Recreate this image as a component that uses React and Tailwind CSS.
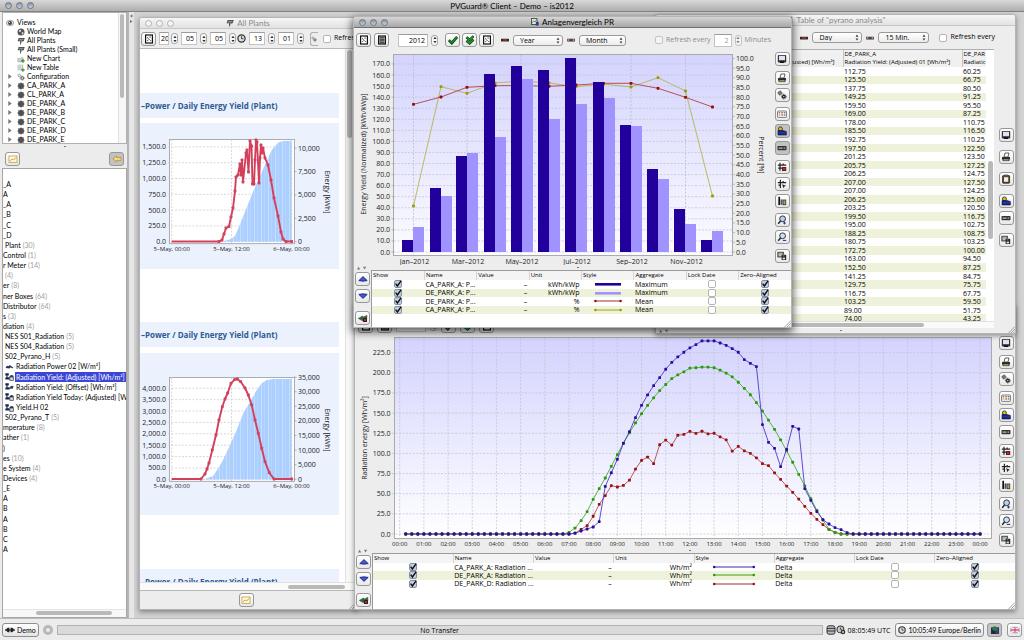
import React from "react";

/* ---------- data ---------- */
const YIELD_A = [112.75, 125.5, 137.75, 149.25, 159.5, 169, 178, 185.5, 192.75, 197.5, 201.25, 205.75, 206.25, 207, 207, 206.25, 203.25, 199.5, 195, 188.25, 180.75, 172.75, 163, 152.5, 141.25, 129.75, 116.75, 103.25, 89, 74];
const YIELD_D = [60.25, 66.75, 80.5, 91.25, 95.5, 87.25, 110.75, 116.5, 110.25, 122.5, 123.5, 127.25, 124.75, 127.5, 124.25, 125, 120.5, 116.75, 102.75, 108.75, 103.25, 100, 94.5, 87.25, 84.75, 75.75, 67.75, 59.5, 51.75, 43.25];
const zeros = (n) => Array(n).fill(0);
const GREEN = [...zeros(28), 2, 7.4, 16.5, 27.7, 43, 56.3, 69.5, 84, 98.5, ...YIELD_A, 59.6, 43.9, 29.4, 17.4, 5.8, 2, ...zeros(24)];
const RED = [...zeros(29), 1, 5.8, 10.3, 22, 36.8, 47.6, 60, 58.3, ...YIELD_D, 34.3, 25.6, 18.2, 11.6, 5.8, 2, ...zeros(24)];
const BLUE = [...zeros(29), 1, 3.7, 6.2, 8.7, 15.3, 59, 76, 92.7, 112.5, 127, 144.4, 159.7, 172.5, 184, 194, 204.4, 213, 219.7, 225.5, 231, 235, 239.5, 239.5, 239.5, 237, 234, 230, 225.5, 216.4, 211.8, 207.7, 135.7, 113.8, 106.3, 83.6, 105, 133.6, 130.3, 56.3, 41.8, 27.7, 17.8, 12.4, 7.9, 5.4, 1.7, ...zeros(22)];

const BARS = [
  [402, 240, 227], [430, 188, 196], [456, 156, 153], [484, 74, 137], [511, 66, 79], [538, 70, 119],
  [565, 58, 104], [593, 82, 98], [620, 125, 126], [647, 169, 179], [674, 209, 224], [701, 240, 231],
];
const MX = [413.5, 441, 467, 495, 521, 549, 576, 603.5, 631, 658, 685.5, 712.5];
const MEAN_RED = [104.3, 97, 87.3, 85.7, 85.5, 86.3, 85, 83.3, 83.3, 88.3, 97.3, 107];
const MEAN_OLIVE = [206, 86.7, 93.3, 83, 81, 83, 86.7, 84, 87, 77.7, 91, 196];

/* ---------- icons ---------- */
const Svg = ({ children, c = "w-[10px] h-[10px]" }) => (
  <svg viewBox="0 0 10 10" className={"shrink-0 " + c} aria-hidden="true">{children}</svg>
);
const ICONS = {
  save: <><rect x="0.8" y="1" width="8.4" height="7.6" rx="0.8" fill="#333" /><rect x="2" y="1.8" width="6" height="4.4" fill="#dfe3f4" /><rect x="3" y="7.4" width="4" height="1.6" fill="#111" /></>,
  print: <><path d="M3 5 L4 1 L8 1 L7 5Z" fill="#fff" stroke="#222" strokeWidth="0.7" /><path d="M1 5h8v2.5H1z" fill="#333" /><rect x="2" y="7" width="6" height="1.8" fill="#cfc88c" stroke="#111" strokeWidth="0.6" /></>,
  tools: <><circle cx="3" cy="3" r="2.1" fill="none" stroke="#666" strokeWidth="0.9" strokeDasharray="0.9 0.6" /><circle cx="3" cy="3" r="1.2" fill="#fff" stroke="#333" strokeWidth="1.1" /><circle cx="6.8" cy="6.6" r="2.3" fill="none" stroke="#333" strokeWidth="1" strokeDasharray="0.9 0.6" /><circle cx="6.8" cy="6.6" r="1.3" fill="#fff" stroke="#222" strokeWidth="1.3" /></>,
  legend: <><rect x="0.5" y="2" width="9" height="6.4" rx="0.6" fill="#f4f4f4" stroke="#666" strokeWidth="0.8" /><rect x="1.6" y="3.2" width="1.6" height="1.2" fill="#d33" /><rect x="1.6" y="5.4" width="1.6" height="1.2" fill="#e90" /><path d="M4.3 3.8h1.6M6.8 3.8h1.6M4.3 6h1.6M6.8 6h1.6" stroke="#444" strokeWidth="1" /></>,
  weather: <><circle cx="3.4" cy="2.9" r="2" fill="#e5c100" stroke="#222" strokeWidth="0.8" /><path d="M1 4.5h5l3.4 1v3.5H1z" fill="#18267c" stroke="#0d1550" strokeWidth="0.6" /><path d="M1.4 6.8h7.6" stroke="#4458c0" strokeWidth="0.5" /></>,
  bar: <><rect x="0.5" y="3" width="9" height="4.2" rx="0.8" fill="#333" /><path d="M1.6 5.1h4" stroke="#ddd" strokeWidth="1" /><rect x="6.6" y="4.4" width="1.6" height="1.4" fill="#b99" /></>,
  gridx: <><path d="M3 0.8v8M0.8 3.2h8.4M6.2 1.4v2.4M1.2 6.2h4" stroke="#222" strokeWidth="1.2" /><rect x="5" y="5" width="4.2" height="4" fill="#222" /><path d="M5.7 5.6l2.8 2.8M8.5 5.6L5.7 8.4" stroke="#d22" strokeWidth="1.1" /></>,
  gridc: <><path d="M3.4 0.8v8.2M0.8 3.6h8.4M1.4 6.2h2M6.2 2v1.6" stroke="#222" strokeWidth="1.2" /><path d="M5 5.2l4 1.6-1.6.6-.8 1.8z" fill="#223" /></>,
  axis: <><path d="M2.2 0.8v8.2" stroke="#111" strokeWidth="1.7" /><rect x="3.6" y="3.4" width="1.8" height="5.4" fill="#555" /><rect x="6" y="4" width="2.8" height="4.8" fill="#b89a5c" stroke="#222" strokeWidth="0.7" /></>,
  zin: <><circle cx="5.6" cy="3.8" r="2.9" fill="#bcd0f2" stroke="#222" strokeWidth="0.9" /><path d="M3.6 6L1.2 8.8" stroke="#222" strokeWidth="1.4" /><path d="M6 8h3M7.5 6.6v2.8" stroke="#1c2f8f" strokeWidth="0.9" /></>,
  zout: <><circle cx="5.6" cy="3.8" r="2.9" fill="#cfe0fa" stroke="#222" strokeWidth="0.9" /><path d="M3.6 6L1.2 8.8" stroke="#222" strokeWidth="1.4" /><path d="M5.8 8.4h3.4" stroke="#1c2f8f" strokeWidth="1" /></>,
  exp: <><rect x="0.8" y="1.2" width="5.6" height="4.8" fill="#999" stroke="#333" strokeWidth="0.8" /><path d="M2 3h3M2 4.4h3" stroke="#eee" strokeWidth="0.6" /><rect x="4.6" y="3.8" width="4.6" height="5.2" fill="#2a2a2a" /><rect x="5.6" y="6.6" width="2.4" height="1.8" fill="#cde5cd" /><path d="M6.8 3v2.6" stroke="#3a3" strokeWidth="1" /></>,
  clip: <><rect x="1.6" y="1.6" width="7" height="7.6" rx="0.7" fill="#5f4a26" stroke="#111" strokeWidth="0.7" /><rect x="3" y="3.2" width="4.2" height="4.6" fill="#eee" /><rect x="3.4" y="0.6" width="3.4" height="1.9" fill="#555" /></>,
  sheet: <><rect x="1.6" y="1" width="6.8" height="8" fill="#fff" stroke="#111" strokeWidth="1.2" /><path d="M3 3.4l1.6 1.2M5.4 3h1.4M3.2 6.8l1.4-1M5.4 5.4l1.4 1.4" stroke="#333" strokeWidth="0.9" fill="none" /></>,
  table: <><rect x="1.6" y="1" width="6.8" height="8" fill="#bbb" stroke="#111" strokeWidth="1.2" /><path d="M2.8 2.8h4.4M2.8 4.3h4.4M2.8 5.8h4.4M2.8 7.3h4.4" stroke="#222" strokeWidth="0.9" /></>,
  check: <><path d="M0.8 5.2L3.8 8 9.2 1.8" fill="none" stroke="#0c3c10" strokeWidth="2.8" /><path d="M1.2 5.4L3.8 7.7 8.9 2" fill="none" stroke="#1f9a2c" strokeWidth="1.2" /></>,
  check2: <><path d="M1.4 2.2L4.6 4.8 8.6 1.2" fill="none" stroke="#0c3c10" strokeWidth="2.4" /><path d="M1.4 5.8L4.6 8.4 8.6 4.6" fill="none" stroke="#0c3c10" strokeWidth="2.4" /><path d="M1.7 2.4L4.6 4.7 8.3 1.5M1.7 6L4.6 8.2 8.3 4.9" fill="none" stroke="#1fa52c" strokeWidth="1.1" /></>,
  up: <path d="M0.8 6.6L5 2.6 9.2 6.6Q5 7.8 0.8 6.6Z" fill="#4258d8" stroke="#111c66" strokeWidth="0.8" />,
  down: <path d="M0.8 3.4L5 7.4 9.2 3.4Q5 2.2 0.8 3.4Z" fill="#4258d8" stroke="#111c66" strokeWidth="0.8" />,
  del: <><path d="M0.4 5.4L4.6 3V4.4L8.8 2.4v3.2L4.6 6.4v1.4z" fill="#2d6b3a" stroke="#132" strokeWidth="0.5" /><rect x="5" y="5" width="4" height="4" fill="#222" /><path d="M5.8 5.8l2.4 2.4M8.2 5.8L5.8 8.2" stroke="#d22" strokeWidth="0.9" /></>,
  chip: <><rect x="0" y="3.4" width="10" height="3.4" rx="0.5" fill="#2b2b2b" /><rect x="2.4" y="4" width="5.2" height="1.8" fill="#b03028" /></>,
  chip2: <><rect x="0" y="3.4" width="10" height="3.4" rx="0.5" fill="#333" /><rect x="0.6" y="4.2" width="2.4" height="1.6" fill="#ccc" /><rect x="4" y="4" width="2" height="1.8" fill="#b03028" /><rect x="7" y="4.2" width="2.2" height="1.6" fill="#ccc" /></>,
  chartY: <><rect x="1" y="2" width="8" height="6.4" fill="#fffbe8" stroke="#c9a545" strokeWidth="0.9" /><path d="M2.2 6.8L4.2 5 5.6 6 8 3.4" fill="none" stroke="#c69a2a" strokeWidth="1" /></>,
  back: <path d="M1 5L4.6 2v1.6H9v2.8H4.6V8z" fill="#f7df86" stroke="#b58c26" strokeWidth="0.8" />,
  eye: <><ellipse cx="5" cy="5" rx="4.6" ry="3.4" fill="#ddd" stroke="#888" strokeWidth="0.8" /><circle cx="5" cy="5" r="2.4" fill="#444" /><circle cx="4.4" cy="4.4" r="0.7" fill="#fff" /></>,
  globe: <><circle cx="5" cy="5" r="4.4" fill="#555" /><path d="M2 3.6Q4 1.4 5 3 5.4 4.6 3.6 5zM6 5.4q2-.6 2.4.6L7 8.4Q5.6 7.4 6 5.4z" fill="#e6e6e6" /></>,
  plant: <><path d="M2 1.4h7.6L8.4 5.4H0.8z" fill="#444" /><path d="M4.2 1.8L3.4 5M6.6 1.8L5.8 5M1.6 3.4h7" stroke="#ddd" strokeWidth="0.5" /><path d="M4.4 5v4.4M4.4 7.4L7 5" stroke="#444" strokeWidth="1" /></>,
  nchart: <><path d="M1 8.6V4l3 1 2-2.6 2 2.2v4z" fill="#cfcfcf" stroke="#999" strokeWidth="0.6" /><path d="M5 7.4h4.6M7.3 5.2v4.4" stroke="#2b9b2b" strokeWidth="1.6" /></>,
  ntable: <><path d="M1 1.4h7M1 3.8h7M1 6.2h5M1.4 1.4v7M4 1.4v7M6.8 1.4v4" stroke="#aaa" strokeWidth="0.8" /><path d="M5 7.4h4.6M7.3 5.2v4.4" stroke="#2b9b2b" strokeWidth="1.6" /></>,
  gears: <><circle cx="3" cy="3.2" r="2.1" fill="none" stroke="#999" strokeWidth="0.8" strokeDasharray="0.9 0.7" /><circle cx="3" cy="3.2" r="1.3" fill="none" stroke="#888" strokeWidth="0.9" /><circle cx="6.6" cy="6.4" r="2.5" fill="none" stroke="#555" strokeWidth="0.9" strokeDasharray="0.9 0.7" /><circle cx="6.6" cy="6.4" r="1.6" fill="none" stroke="#444" strokeWidth="1.1" /></>,
  sun: <><circle cx="5" cy="5" r="3.7" fill="#484848" /><path d="M5 0.6v8.8M0.6 5h8.8M1.8 1.8l6.4 6.4M8.2 1.8L1.8 8.2" stroke="#555" strokeWidth="1.2" /></>,
  clock: <><circle cx="5" cy="5" r="4" fill="#ddd" stroke="#333" strokeWidth="1.4" /><path d="M5 2.4V5.2h2.2" fill="none" stroke="#222" strokeWidth="0.9" /></>,
  demo: <><path d="M0 5h10" stroke="#111" strokeWidth="1.2" /><path d="M4.4 2.8v4.4H3Q1.2 6.6 1.2 5 1.2 3.4 3 2.8zM5.6 2.8H7Q8.8 3.4 8.8 5 8.8 6.6 7 7.2H5.6z" fill="#222" /></>,
  db: <><rect x="1" y="0.8" width="8" height="8.4" rx="2" fill="#bbb" stroke="#333" strokeWidth="1" /><path d="M1 3.4h8M1 6h8" stroke="#333" strokeWidth="1" /></>,
  sync: <><circle cx="4.4" cy="4.4" r="3.4" fill="#ccc" stroke="#333" strokeWidth="1.1" /><path d="M4.4 2.4v2h1.6" stroke="#222" strokeWidth="0.7" fill="none" /><circle cx="7" cy="7" r="2.3" fill="#333" /><circle cx="7" cy="7" r="1" fill="#ccc" /></>,
  world: <><rect x="1" y="2.4" width="8" height="6.6" fill="#1c2a4c" /><circle cx="4.6" cy="3.6" r="2.4" fill="#2d7d3a" /><path d="M4.6 5.6l3.6-3.2v5z" fill="#3358b8" /><circle cx="7.2" cy="7.4" r="1.8" fill="#444" /></>,
  uk: <><rect x="0.4" y="1.8" width="9.2" height="6.4" fill="#8296da" /><path d="M0.4 1.8l9.2 6.4M9.6 1.8L0.4 8.2" stroke="#fff" strokeWidth="1.1" /><path d="M5 1.8v6.4M0.4 5h9.2" stroke="#fff" strokeWidth="2.4" /><path d="M5 1.8v6.4M0.4 5h9.2" stroke="#e0525c" strokeWidth="1.3" /></>,
  compare: <><rect x="0.5" y="0.8" width="7" height="7.4" fill="#dfeadf" stroke="#222" strokeWidth="0.9" /><path d="M1.4 6.4L3.4 3.4 5 5 7 2" fill="none" stroke="#2a7a2a" strokeWidth="0.9" /><rect x="6" y="5" width="3.6" height="4.4" fill="#2b3a9c" /></>,
  tcols: <path d="M1 1h8v1.6H1zM1 2.6h1.4V9H1zM4.2 2.6h1.6V9H4.2zM7.6 2.6H9V9H7.6z" fill="#444" />,
  power: <path d="M0.6 6.8Q2 3.4 4 4.6 5 1.6 9.4 6.6L7.6 7 6.4 5.8 5 7.2z" fill="#27335e" />,
  yieldI: <><path d="M0.4 1.4h3.8v2.4H2.8v2H5.2V8.2H0.4V6h1.2V3.8H0.4z" fill="#16264f" /><path d="M5 6Q7 3 9.6 4.6L8.4 7.4H5.4z" fill="#333c55" /></>,
  yieldS: <><path d="M0.4 1.4h3.8v2.4H2.8v2H5.2V8.2H0.4V6h1.2V3.8H0.4z" fill="#16264f" /><path d="M5 5Q7 2.4 9.4 4.2V5.6H5z" fill="#333c55" /><rect x="5.4" y="5.6" width="3.8" height="3.6" fill="#ddd" stroke="#333" strokeWidth="0.8" /></>,
};
const Icon = ({ n, c }) => <Svg c={c}>{ICONS[n]}</Svg>;

/* ---------- small controls ---------- */
const Btn = ({ n, label, on, c = "w-[15px] h-[14px]" }) => (
  <button
    type="button"
    aria-label={label}
    className={"flex shrink-0 items-center justify-center rounded-[3px] border border-[#989898] " + (on ? "bg-[#c2c2c2] " : "bg-linear-to-b from-white to-[#e8e8e8] ") + c}
  >
    <Icon n={n} />
  </button>
);
const Stepper = ({ label, dim }) => (
  <button type="button" aria-label={label} className={"flex h-[11px] w-[7px] shrink-0 items-center justify-center rounded-[3px] border border-[#a8a8a8] bg-[#f8f8f8] " + (dim ? "opacity-60" : "")}>
    <svg viewBox="0 0 4 8" className="h-2 w-1" aria-hidden="true"><path d="M0.4 3L2 0.8 3.6 3zM0.4 5L2 7.2 3.6 5z" fill="#333" /></svg>
  </button>
);
const Field = ({ label, value, c, dim, pad = "px-[2px] text-right" }) => (
  <input aria-label={label} defaultValue={value} className={"h-[13px] shrink-0 border border-[#c4c4c4] border-t-[#9c9c9c] bg-white text-[7px] leading-none outline-none " + pad + " " + (dim ? "text-[#999] " : "text-black ") + c} />
);
const Pick = ({ label, value, c }) => (
  <span className={"relative flex shrink-0 " + c}>
    <select aria-label={label} defaultValue={value} className="h-[11px] w-full appearance-none rounded-[3px] border border-[#9a9a9a] bg-linear-to-b from-white to-[#ececec] pl-[6px] text-[7px] leading-none text-black outline-none">
      <option>{value}</option>
    </select>
    <svg viewBox="0 0 4 8" className="pointer-events-none absolute right-[3px] top-[2px] h-[7px] w-1" aria-hidden="true"><path d="M0.4 3L2 0.6 3.6 3zM0.4 5L2 7.4 3.6 5z" fill="#333" /></svg>
  </span>
);
const Box = ({ label, on, dim }) => (
  <span className="relative inline-flex size-2 shrink-0 align-top">
    <input type="checkbox" aria-label={label} defaultChecked={on} className={"m-0 size-2 appearance-none rounded-[2px] border " + (on ? "border-[#8490a6] bg-[#c3cddd]" : dim ? "border-[#c4c4c4] bg-[#f4f4f4]" : "border-[#b4b4b4] bg-white")} />
    {on && <svg viewBox="0 0 8 8" className="pointer-events-none absolute inset-0 size-2" aria-hidden="true"><path d="M1.6 3.6L3.4 6 7.2 0.6" fill="none" stroke="#111" strokeWidth="1.4" /></svg>}
  </span>
);
const Refresh = ({ dim }) => (
  <label className={"flex shrink-0 items-center gap-[3px] whitespace-nowrap text-[7px] " + (dim ? "text-[#8c8c8c]" : "text-black")}>
    <Box label="Refresh every" dim={dim} />
    <span>Refresh every</span>
  </label>
);
const Dots = ({ active }) => (
  <span className="absolute left-[5px] top-0 flex h-full items-center gap-[4px]">
    {[0, 1, 2].map((i) => (
      <span key={i} className={"size-[7px] rounded-full border " + (active ? "border-[#6f7884] bg-linear-to-b from-[#8793a3] to-[#c9d3de]" : "border-[#b2b2b2] bg-[#f4f4f4]")} />
    ))}
  </span>
);
const Win = ({ title, icon, active, place, children }) => (
  <section className={"absolute flex flex-col overflow-hidden rounded-t-[3px] border border-[#b4b4b4] bg-[#ededed] " + (active ? "shadow-[0_3px_8px_1px_rgba(0,0,0,0.65)] " : "shadow-[0_2px_5px_rgba(0,0,0,0.4)] ") + place}>
    <header className={"relative flex h-[11px] shrink-0 items-center justify-center gap-[3px] text-[8px] leading-none [font-family:Lato,'Noto_Sans',sans-serif] " + (active ? "border-b border-[#707070] bg-linear-to-b from-[#d6d6d6] to-[#a8a8a8] text-black" : "border-b border-[#c8c8c8] bg-linear-to-b from-[#f6f6f6] to-[#e2e2e2] text-[#8a8a8a]")}>
      {active !== undefined && <Dots active={active} />}
      {icon && <Icon n={icon} c="w-2 h-2" />}
      <h2>{title}</h2>
    </header>
    {children}
  </section>
);
const Grip = () => (
  <svg viewBox="0 0 7 7" className="absolute bottom-0 right-0 size-[7px]" aria-hidden="true"><path d="M0.5 7L7 0.5M3 7L7 3M5.4 7L7 5.4" stroke="#8a8a8a" strokeWidth="0.8" /></svg>
);
const Split = () => (
  <div className="flex h-[5px] shrink-0 items-center px-[3px]">
    <svg viewBox="0 0 10 4" className="h-1 w-[10px]" aria-hidden="true"><path d="M0 3.4L1.6 0.8 3.2 3.4zM6 0.8h3.2L7.6 3.4z" fill="#777" /></svg>
    <span className="mx-auto h-px w-[2px] bg-[#777]" />
  </div>
);
const SIDE = [
  [["save", "Save"]],
  [["print", "Print"], ["tools", "Settings"]],
  [["legend", "Legend"], ["weather", "Background", 1], ["bar", "Toolbar", 1]],
  [["gridx", "Remove cursor"], ["gridc", "Cursor"], ["axis", "Axis"]],
  [["zin", "Zoom in"], ["zout", "Zoom out"]],
  [["exp", "Export"]],
];
const Side = ({ groups, gap, pressed }) => (
  <div className={"flex w-[18px] shrink-0 flex-col items-center " + gap}>
    {groups.map((g, i) => (
      <div key={i} className="flex flex-col gap-[3px]">
        {g.map(([n, l, p]) => <Btn key={n} n={n} label={l} on={p && pressed} />)}
      </div>
    ))}
  </div>
);

/* ---------- series tables ---------- */
const LineStyle = ({ kind, color }) => (
  <svg viewBox="0 0 32 6" className="mx-auto h-[6px] w-8" aria-hidden="true">
    {kind === "bar" && <rect x="3" y="2" width="26" height="2.6" fill={color} />}
    {kind === "line" && <><path d="M3 3h26" stroke={color} strokeWidth="0.9" /><circle cx="3.4" cy="3" r="1.3" fill={color} /><circle cx="28.6" cy="3" r="1.3" fill={color} /></>}
  </svg>
);
const LongLine = ({ color }) => (
  <svg viewBox="0 0 44 6" className="mx-auto h-[6px] w-11" aria-hidden="true">
    <path d="M2 3h40" stroke={color} strokeWidth="0.9" /><circle cx="2.2" cy="3" r="1.3" fill={color} /><circle cx="41.8" cy="3" r="1.3" fill={color} />
  </svg>
);
const COLS = ["Show", "Name", "Value", "Unit", "Style", "Aggregate", "Lock Date", "Zero–Aligned"];
const Series = ({ rows, tall }) => (
  <div className="flex min-h-0 flex-1">
    <div className="flex w-[17px] shrink-0 flex-col items-center gap-[3px] pb-[2px] pt-[2px]">
      <Btn n="up" label="Move up" />
      <Btn n="down" label="Move down" />
      <span className="mt-auto flex"><Btn n="del" label="Delete series" /></span>
    </div>
    <div className="min-w-0 flex-1 border-l border-t border-[#9a9a9a] bg-white">
      <table className={"w-full table-fixed border-collapse text-[7px] leading-[7px] " + tall}>
        <thead>
          <tr className="h-[9px] bg-[#f4f4f4] text-[6px]">
            {COLS.map((c) => <th key={c} className="whitespace-nowrap border-l border-[#d4d4d4] p-0 pl-px text-left font-normal first:border-l-0">{c}</th>)}
          </tr>
        </thead>
        <tbody>
          {rows.map(([name, unit, kind, color, agg]) => (
            <tr key={name + color} className="even:bg-[#eff2da]">
              <td className="p-0 text-center leading-[0]"><Box label={"Show " + name} on /></td>
              <td className="whitespace-nowrap p-0 pl-px">{name}</td>
              <td className="p-0 pr-[2px] text-right">–</td>
              <td className="p-0 pr-[2px] text-right">{unit}</td>
              <td className="p-0">{kind === "long" ? <LongLine color={color} /> : <LineStyle kind={kind} color={color} />}</td>
              <td className="p-0 pl-px">{agg}</td>
              <td className="p-0 text-center leading-[0]"><Box label={"Lock date " + name} /></td>
              <td className="p-0 text-center leading-[0]"><Box label={"Zero aligned " + name} on /></td>
            </tr>
          ))}
        </tbody>
      </table>
    </div>
  </div>
);

/* ---------- charts ---------- */
const DASH = "2 1.5";
const T = ({ x, y, a = "start", s = "text-[7px]", children, r }) => (
  <text x={x} y={y} textAnchor={a} className={s} fill="#222" transform={r ? `rotate(${r} ${x} ${y})` : undefined}>{children}</text>
);
const Dot = ({ x, y, f }) => <rect x={x - 1.4} y={y - 1.4} width="2.8" height="2.8" rx="0.7" fill={f} />;
const pts = (a) => a.map((p) => p.join(",")).join(" ");

const CompareChart = () => (
  <svg viewBox="354 52 419 213" className="h-auto min-w-0 flex-1" role="img" aria-label="Energy yield by month">
    <defs><linearGradient id="sky1" x1="0" y1="0" x2="0" y2="1"><stop offset="0" stopColor="#d3d3fe" /><stop offset="1" stopColor="#fcfcff" /></linearGradient></defs>
    <rect x="393.5" y="54.5" width="339" height="201" fill="url(#sky1)" stroke="#aaa" />
    {Array.from({ length: 18 }, (_, i) => (
      <g key={i}>
        <path d={`M394 ${252 - i * 11.06}H733`} stroke="#c0c0cf" strokeWidth="0.7" strokeDasharray={DASH} />
        <T x="390" y={254.5 - i * 11.06} a="end">{(i * 10).toFixed(1)}</T>
        <path d={`M391.5 ${252 - i * 11.06}H394`} stroke="#999" strokeWidth="0.6" />
      </g>
    ))}
    {["Jan–2012", "Mar–2012", "May–2012", "Jul–2012", "Sep–2012", "Nov–2012"].map((m, i) => (
      <g key={m}>
        <path d={`M${MX[i * 2]} 55V257`} stroke="#b6b6c8" strokeWidth="0.7" strokeDasharray={DASH} />
        <T x={MX[i * 2] + 1} y="264" a="middle">{m}</T>
      </g>
    ))}
    {Array.from({ length: 21 }, (_, i) => (
      <g key={i}>
        <path d={`M733 ${252 - i * 9.68}h2`} stroke="#999" strokeWidth="0.6" />
        <T x="736" y={254.5 - i * 9.68}>{(i * 5).toFixed(1)}</T>
      </g>
    ))}
    <polyline points={pts(MX.map((x, i) => [x, MEAN_OLIVE[i]]))} fill="none" stroke="#b4b44c" strokeWidth="0.9" />
    <polyline points={pts(MX.map((x, i) => [x, MEAN_RED[i]]))} fill="none" stroke="#b0404c" strokeWidth="0.9" />
    {MX.map((x, i) => <g key={x}><Dot x={x} y={MEAN_OLIVE[i]} f="#9c9c00" /><Dot x={x} y={MEAN_RED[i]} f="#960a0a" /></g>)}
    {BARS.map(([x, a, b]) => (
      <g key={x}>
        <rect x={x + 11} y={b} width="11" height={252 - b} fill="#a092ff" />
        <rect x={x} y={a} width="11" height={252 - a} fill="#22009c" />
      </g>
    ))}
    <T x="366" y="154" a="middle" r={-90}>Energy Yield (Normalized) [kWh/kWp]</T>
    <T x="759" y="155" a="middle" r={90}>Percent [%]</T>
  </svg>
);

const dx = (i) => 399.7 + i * 6.046;
const dy = (v) => 534 - v * 0.806;
const DayLine = ({ data, line, dot }) => (
  <g>
    <polyline points={pts(data.slice(1, 98).map((v, i) => [dx(i + 1), dy(v)]))} fill="none" stroke={line} strokeWidth="0.9" />
    {data.slice(1, 98).map((v, i) => <Dot key={i} x={dx(i + 1)} y={dy(v)} f={dot} />)}
  </g>
);
const padTo = (a) => [...a, ...zeros(97)].slice(0, 97);
const DayChart = () => (
  <svg viewBox="355 336 642 211" className="h-auto min-w-0 flex-1" role="img" aria-label="Radiation energy by hour">
    <defs><linearGradient id="sky2" x1="0" y1="0" x2="0" y2="1"><stop offset="0" stopColor="#d3d3fe" /><stop offset="1" stopColor="#ffffff" /></linearGradient></defs>
    <rect x="394.5" y="337.5" width="597" height="201" fill="url(#sky2)" stroke="#aaa" />
    {Array.from({ length: 10 }, (_, i) => (
      <g key={i}>
        <path d={`M392 ${dy(i * 25)}H991`} stroke="#c0c0cc" strokeWidth="0.7" strokeDasharray={DASH} />
        <T x="390.5" y={dy(i * 25) + 2.5} a="end">{(i * 25).toFixed(1)}</T>
      </g>
    ))}
    {Array.from({ length: 25 }, (_, i) => (
      <g key={i}>
        <path d={`M${dx(i * 4)} 338V540`} stroke="#c0c0cc" strokeWidth="0.7" strokeDasharray={DASH} />
        <T x={dx(i * 4)} y="545.5" a="middle" s="text-[6px]">{String(i % 24).padStart(2, "0") + ":00"}</T>
      </g>
    ))}
    <DayLine data={padTo(RED)} line="#b44a4a" dot="#961414" />
    <DayLine data={padTo(GREEN)} line="#44aa34" dot="#2a9a08" />
    <DayLine data={padTo(BLUE)} line="#4c3cc4" dot="#2c0ca0" />
    <T x="367" y="438" a="middle" r={-90}>Radiation energy [Wh/m²]</T>
  </svg>
);

const PlantChart = ({ box, top, base, left, step, right, rstep, line, area, mid, id }) => (
  <svg viewBox={box} className="h-auto w-full" role="img" aria-label="Power and daily energy yield">
    <defs>
      <pattern id={id} width="7" height="10" patternUnits="userSpaceOnUse">
        <rect width="7" height="10" fill="#abd0ff" /><rect x="2" width="1" height="10" fill="#c6dffe" /><rect x="5" width="0.7" height="10" fill="#bcd8ff" />
      </pattern>
    </defs>
    <rect x="169.5" y={top} width="125" height={base + 2 - top} fill="#fff" stroke="#999" strokeWidth="0.8" />
    {left.map((l, i) => (
      <g key={l}>
        <path d={`M168 ${base - i * step}H294`} stroke="#c8c8c8" strokeWidth="0.7" strokeDasharray={DASH} />
        <T x="166" y={base - i * step + 2.5} a="end">{l}</T>
      </g>
    ))}
    <polygon points={pts(area)} fill={`url(#${id})`} />
    {[171.7, 231.5, 291.5].map((x, i) => (
      <g key={x}>
        <path d={`M${x} ${top}V${base + 3}`} stroke="#c8c8c8" strokeWidth="0.7" strokeDasharray={DASH} />
        <T x={x} y={base + 9} a="middle" s="text-[6px]">{["5–May, 00:00", "5–May, 12:00", "6–May, 00:00"][i]}</T>
      </g>
    ))}
    {right.map((l, i) => <g key={l}><path d={`M294 ${base - i * rstep}h2.5`} stroke="#999" strokeWidth="0.7" /><T x="298" y={base - i * rstep + 2.5}>{l}</T></g>)}
    <polyline points={pts(line)} fill="none" stroke="#d3405c" strokeWidth="1.9" strokeLinejoin="round" />
    {line.filter((_, i) => i > 0).map(([x, y], i) => <Dot key={i} x={x} y={y} f="#d3405c" />)}
    <T x="325" y={mid} a="middle" r={90}>Energy [kWh]</T>
  </svg>
);
const LINE1 = [[171.7, 241.5], [219, 241.5], [222, 240], [224, 234], [226, 228], [229, 226.5], [231, 217], [233, 208], [235, 191], [236, 177], [238, 175], [240, 164], [241, 175], [242, 160], [243, 182], [246, 153], [247, 150], [248.5, 172], [250, 141], [251.5, 146], [252.5, 184], [254, 184], [255, 160], [256, 140], [257, 142], [259, 183], [260, 158], [261, 145], [262, 153], [263, 148], [265, 158], [268, 165], [271, 180], [274, 198], [278, 216], [281, 232], [283, 239], [286, 241.5], [291.7, 241.5]];
const AREA1 = [[221, 241.7], [231, 239], [235, 235.7], [239, 226.7], [245, 211.7], [253, 191.7], [264, 167], [271.7, 150], [278.3, 142.5], [283, 141], [291.7, 140.7], [291.7, 241.7]];
const LINE2 = [[171.7, 479], [201, 479], [205, 474], [207, 469], [209, 463], [212.3, 450], [216, 435], [219, 420], [222.3, 406.7], [225, 399], [227.7, 393], [231, 383.3], [234.5, 379.6], [237.3, 379], [240.7, 381.7], [245, 388], [248.3, 395], [251.7, 405], [255, 420], [258.3, 433.3], [261.7, 448.3], [265, 461.7], [269.3, 472.7], [274, 479], [291.7, 479]];
const AREA2 = [[203, 479.5], [213, 476], [218.3, 468.3], [223, 460], [230, 445], [236.7, 430], [243.3, 413], [251.7, 399], [256.7, 390], [261.7, 383.3], [266.7, 380], [273.3, 379], [291.7, 379], [291.7, 479.5]];
const L1 = ["0.0", "250.0", "500.0", "750.0", "1,000.0", "1,250.0", "1,500.0"];
const L2 = ["0.0", "500.0", "1,000.0", "1,500.0", "2,000.0", "2,500.0", "3,000.0", "3,500.0", "4,000.0"];
const R1 = ["0", "2,500", "5,000", "7,500", "10,000"];
const R2 = ["0", "5,000", "10,000", "15,000", "20,000", "25,000", "30,000", "35,000"];
const CardTitle = ({ children }) => (
  <h3 className="flex h-[25px] shrink-0 items-center whitespace-nowrap bg-[#ebf1fd] pl-px text-[8px] font-bold text-[#2c5a94]">{children}</h3>
);
const PLANT_TITLE = "–Power / Daily Energy Yield (Plant)";

/* ---------- trees ---------- */
const VIEWS = [["globe", "World Map"], ["plant", "All Plants"], ["plant", "All Plants (Small)"], ["nchart", "New Chart"], ["ntable", "New Table"], ["gears", "Configuration", 1], ["sun", "CA_PARK_A", 1], ["sun", "CL_PARK_A", 1], ["sun", "DE_PARK_A", 1], ["sun", "DE_PARK_B", 1], ["sun", "DE_PARK_C", 1], ["sun", "DE_PARK_D", 1], ["sun", "DE_PARK_E", 1]];
const NODES = [["_A"], ["A"], ["_A"], ["_B"], ["_C"], ["_D"], ["Plant", 30, "", 1], ["Control", 1], ["r Meter", 14], ["", 4], ["er", 8], ["ner Boxes", 64], ["Distributor", 64], ["s", 3], ["diation", 4], ["NES S01_Radiation", 5, "", 1], ["NES S04_Radiation", 5, "", 1], ["S02_Pyrano_H", 5, "", 1], ["Radiation Power 02 [W/m²]", 0, "power"], ["Radiation Yield: (Adjusted) [Wh/m²]", 0, "yieldS"], ["Radiation Yield: (Offset) [Wh/m²]", 0, "yieldI"], ["Radiation Yield Today: (Adjusted) [Wh/m²]", 0, "yieldS"], ["Yield.H 02", 0, "yieldS"], ["S02_Pyrano_T", 5, "", 1], ["mperature", 8], ["ather", 1], [")"], ["es", 10], ["e System", 4], ["Devices", 4], ["_E"], ["A"], ["B"], ["A"], ["B"], ["C"], ["A"]];

const Sidebar = () => (
  <aside className="flex w-[129px] shrink-0 flex-col border-r-2 border-[#b5b5b5] bg-[#ececec] pl-[2px] [font-family:Lato,'Noto_Sans',sans-serif]">
    <nav aria-label="Views" className="relative h-[132px] shrink-0 overflow-hidden border border-[#b0b0b0] bg-white pt-[5px] text-[7px] leading-[9px]">
      <div className="flex h-[9px] items-center gap-[3px] pl-[3px]"><Icon n="eye" c="w-2 h-2" /><span>Views</span></div>
      <ul>
        {VIEWS.map(([n, t, open]) => (
          <li key={t} className="flex h-[9px] items-center pl-[5px]">
            <svg viewBox="0 0 4 6" className="h-[5px] w-1" aria-hidden="true">{open && <path d="M0 0L4 3 0 6z" fill="#777" />}</svg>
            <span className="ml-[5px] flex"><Icon n={n} c="w-2 h-2" /></span>
            <span className="ml-[2px] whitespace-nowrap">{t}</span>
          </li>
        ))}
      </ul>
      <span className="absolute inset-y-0 right-0 w-2 border-l border-[#e2e2e2] bg-[#f7f7f7]" />
      <span className="absolute right-[2px] top-px h-[84px] w-1 rounded-full bg-[#b9b9b9]" />
    </nav>
    <div className="flex h-[24px] shrink-0 items-end justify-between px-[3px] pb-[2px]">
      <Btn n="chartY" label="Chart" />
      <span className="mb-auto mt-[2px] h-px w-[2px] bg-[#777]" />
      <Btn n="back" label="Back" on />
    </div>
    <nav aria-label="Devices" className="flex min-h-0 flex-1 flex-col overflow-hidden border border-[#a6a6a6] bg-white text-[7px] leading-[10px]">
      <ul className="mt-[10px] grid h-[375px] shrink-0 auto-rows-fr">
        {NODES.map(([t, n, icon, deep], i) => (
          <li key={i} className={"flex min-h-0 items-center whitespace-nowrap " + (icon ? "gap-px pl-[2px]" : deep ? "pl-[2px]" : "")}>
            {icon && <span className="flex"><Icon n={icon} c="w-[9px] h-[9px]" /></span>}
            <span className={i === 19 ? "bg-[#3b46d6] px-px text-white" : icon ? "px-px" : ""}>{t}</span>
            {n ? <span className="ml-[2px] text-[#a0a0a0]">({n})</span> : null}
          </li>
        ))}
      </ul>
      <div className="mt-auto h-2 shrink-0 border-t border-[#e4e4e4] bg-[#f8f8f8] pl-[33px] pt-px"><span className="block h-1 w-[76px] rounded-full bg-[#b9b9b9]" /></div>
    </nav>
  </aside>
);

export default function App() {
  return (
    <div className="flex h-screen flex-col overflow-hidden bg-[#ececec] text-black [font-family:'Open_Sans','Noto_Sans',sans-serif]">
      <header className="relative flex h-3 shrink-0 items-center justify-center border-b border-[#828282] bg-linear-to-b from-[#d8d8d8] to-[#aeaeae] text-[8px] leading-none [font-family:Lato,'Noto_Sans',sans-serif]">
        <Dots active />
        <h1>PVGuard® Client – Demo – is2012</h1>
      </header>
      <div className="flex min-h-0 flex-1">
        <Sidebar />
        <div className="w-[5px] shrink-0 bg-[#e6e6e6] pt-[2px]">
          <svg viewBox="0 0 5 10" className="h-[10px] w-[5px]" aria-hidden="true"><path d="M3.4 0.6v3L1 2.1zM1 6v3l2.4-1.5z" fill="#666" /></svg>
        </div>
        <main className="relative min-w-0 flex-1 overflow-hidden bg-[#d2d2d2]">
          <Win title="All Plants" icon="plant" active={false} place="left-[5px] top-[5px] bottom-2 w-[218px]">
            <div className="flex h-[20px] shrink-0 items-center gap-[3px] overflow-hidden border-b border-[#b8b8b8] pl-px">
              <Btn n="sheet" label="Today" />
              <span className="flex shrink-0 items-center gap-[2px]"><Field label="Year" value="20" c="w-[10px]" pad="pl-px" /><Stepper label="Change year" /></span>
              <span className="flex shrink-0 items-center gap-[3px]"><Field label="Month" value="05" c="w-[16px]" /><Stepper label="Change month" /></span>
              <span className="flex shrink-0 items-center gap-[3px]"><Field label="Day" value="05" c="w-[16px]" /><Stepper label="Change day" /></span>
              <span className="flex shrink-0 items-center gap-[3px] pl-px">
                <span className="-ml-[3px] flex"><Icon n="clock" c="w-[9px] h-[9px]" /></span>
                <Field label="Hour" value="13" c="w-[16px]" /><Stepper label="Change hour" />
              </span>
              <span className="flex shrink-0 items-center gap-[3px]"><Field label="Minute" value="01" c="w-[16px]" /><Stepper label="Change minute" /></span>
              <span className="ml-[3px] mr-[2px] flex h-[14px] w-2 shrink-0 items-center rounded-l-[3px] border-y border-l border-[#b0b0b0]"><Icon n="gears" c="w-[6px] h-[6px]" /></span>
              <Refresh />
            </div>
            <div className="flex min-h-0 flex-1 bg-white">
              <div className="flex min-w-0 flex-1 flex-col overflow-hidden">
                <div className="flex h-[535px] flex-col overflow-hidden pt-[44px]">
                  <CardTitle>{PLANT_TITLE}</CardTitle>
                  <div className="mt-[5px] shrink-0 bg-[#ebf1fd]"><PlantChart id="s1" box="140 123 199 146" top={139.5} base={241.7} left={L1} step={15.8} right={R1} rstep={23.4} line={LINE1} area={AREA1} mid={192} /></div>
                  <div className="mt-[53px] shrink-0"><CardTitle>{PLANT_TITLE}</CardTitle></div>
                  <div className="mt-[6px] shrink-0 bg-[#ebf1fd]"><PlantChart id="s2" box="140 353 199 162" top={377.5} base={479.3} left={L2} step={11.38} right={R2} rstep={14.6} line={LINE2} area={AREA2} mid={430} /></div>
                  <div className="mt-[54px] shrink-0"><CardTitle>{PLANT_TITLE}</CardTitle></div>
                </div>
              </div>
              <div className="w-[17px] shrink-0 pl-[6px]"><div className="h-full border-l border-[#e2e2e2] bg-[#f7f7f7] pl-px pt-px"><span className="block h-[88px] w-[5px] rounded-full bg-[#b9b9b9]" /></div></div>
            </div>
            <div className="flex h-2 shrink-0 items-center justify-end border-t border-[#e0e0e0] bg-[#fafafa] pr-[11px]"><span className="h-1 w-[57px] rounded-full bg-[#b9b9b9]" /></div>
            <div className="flex h-[19px] shrink-0 items-center justify-center border-t border-[#b8b8b8] pr-1"><Btn n="chartY" label="Chart" /></div>
            <Grip />
          </Win>

          <Win title="" place="left-[220px] right-2 top-[291px] bottom-2">
            <div className="flex h-[21px] shrink-0 items-center gap-1 px-[3px]">
              <Btn n="sheet" label="Today" /><Btn n="table" label="Table" />
              <Field label="Date" value="" c="w-[30px]" /><Stepper label="Change date" />
              <Btn n="check" label="Apply" /><Btn n="check2" label="Apply all" /><Btn n="sheet" label="Sheet" />
            </div>
            <div className="flex shrink-0"><DayChart /><Side groups={SIDE} gap="gap-[5px]" /></div>
            <div className="h-px shrink-0" /><Split />
            <Series
              tall="h-[34px]"
              rows={[["CA_PARK_A: Radiation ...", "Wh/m²", "long", "#2c0cb0", "Delta"], ["DE_PARK_A: Radiation ...", "Wh/m²", "long", "#2a9a08", "Delta"], ["DE_PARK_D: Radiation ...", "Wh/m²", "long", "#961414", "Delta"]]}
            />
            <Grip />
          </Win>

          <Win title={'Table of "pyrano analysis"'} icon="tcols" place="right-2 top-[2px] h-[320px] w-[361px]">
            <div className="flex h-[23px] shrink-0 items-center justify-end gap-1 pr-[20px]">
              <Icon n="chip" c="w-2 h-2" /><Pick label="Range" value="Day" c="w-[50px]" />
              <Icon n="chip2" c="w-2 h-2" /><Pick label="Resolution" value="15 Min." c="w-[51px]" />
              <span className="ml-[6px] flex"><Refresh /></span>
            </div>
            <div className="flex min-h-0 flex-1">
              <div className="flex min-w-0 flex-1 flex-col border-t border-[#b0b0b0] bg-white">
                <div className="flex min-h-0 flex-1">
                  <div className="min-w-0 flex-1 overflow-hidden">
                    <table className="h-[273px] w-full table-fixed border-collapse text-[7px] leading-[7px]">
                      <thead>
                        <tr className="h-[17px] bg-[#f0f0f0] align-top">
                          <th className="p-0" aria-label="Time" />
                          <th className="w-[118px] whitespace-nowrap border-l border-[#c4c4c4] p-0 pr-2 text-right text-[6px] font-normal leading-[8px]"><br />Radiation Yield: (Adjusted) [Wh/m²]</th>
                          <th className="w-[119px] whitespace-nowrap border-l border-[#c4c4c4] p-0 pl-px text-left text-[6px] font-normal leading-[8px]">DE_PARK_A<br />Radiation Yield: (Adjusted) 01 [Wh/m²]</th>
                          <th className="w-[24px] overflow-hidden whitespace-nowrap border-l border-[#c4c4c4] p-0 pl-px text-left text-[6px] font-normal leading-[8px]">DE_PAR<br />Radiatic</th>
                        </tr>
                      </thead>
                      <tbody>
                        {YIELD_A.map((v, i) => (
                          <tr key={i} className="even:bg-[#eff2da]">
                            <td className="p-0" /><td className="p-0" />
                            <td className="p-0 pl-px">{v.toFixed(2)}</td>
                            <td className="overflow-hidden p-0 pl-px">{YIELD_D[i].toFixed(2)}</td>
                          </tr>
                        ))}
                      </tbody>
                    </table>
                  </div>
                  <div className="w-2 shrink-0 pt-[111px]"><span className="mx-auto block h-[78px] w-[5px] rounded-full bg-[#b9b9b9]" /></div>
                </div>
                <div className="flex h-[7px] shrink-0 items-center justify-end border-t border-[#e0e0e0] bg-[#fafafa] pr-[70px]"><span className="h-1 w-[180px] rounded-full bg-[#b9b9b9]" /></div>
              </div>
              <div className="flex w-[21px] shrink-0 flex-col items-end pt-[79px]">
                <Side gap="gap-[8px]" groups={[[["save", "Save"]], [["print", "Print"]], [["clip", "Copy"]], [["weather", "Background"], ["bar", "Toolbar"]], [["exp", "Export"]]]} />
              </div>
            </div>
            <Split />
            <Grip />
          </Win>

          <Win title="Anlagenvergleich PR" icon="compare" active place="left-[219px] top-1 h-[312px] w-[439px]">
            <div className="flex h-[24px] shrink-0 items-center gap-[3px] pl-[2px]">
              <Btn n="sheet" label="Today" /><Btn n="table" label="Table" />
              <span className="ml-[6px] flex items-center gap-[3px]"><Field label="Year" value="2012" c="w-[30px]" /><Stepper label="Change year" /></span>
              <span className="ml-[4px] flex gap-[2px]"><Btn n="check" label="Apply" /><Btn n="check2" label="Apply all" /><Btn n="sheet" label="Sheet" /></span>
              <span className="ml-[4px] flex items-center gap-1"><Icon n="chip" c="w-2 h-2" /><Pick label="Range" value="Year" c="w-[50px]" /><Icon n="chip2" c="w-2 h-2" /><Pick label="Resolution" value="Month" c="w-[47px]" /></span>
              <span className="ml-auto flex items-center gap-[3px] pr-[20px]"><Refresh dim /><Field label="Interval" value="2" c="w-[18px]" dim /><Stepper label="Change interval" dim /><span className="text-[7px] text-[#8c8c8c]">Minutes</span></span>
            </div>
            <div className="flex shrink-0"><CompareChart /><Side groups={SIDE} gap="gap-[5px]" pressed /></div>
            <Split />
            <Series
              tall="h-[43px]"
              rows={[["CA_PARK_A: P...", "kWh/kWp", "bar", "#22009c", "Maximum"], ["DE_PARK_A: P...", "kWh/kWp", "bar", "#a092ff", "Maximum"], ["DE_PARK_A: P... ", "%", "line", "#961414", "Mean"], ["CA_PARK_A: P... ", "%", "line", "#9c9c00", "Mean"]]}
            />
            <Grip />
          </Win>
        </main>
      </div>
      <footer className="flex h-[22px] shrink-0 items-center border-t border-[#bdbdbd] bg-[#ececec] px-[2px] pt-px text-[7px] leading-none">
        <button type="button" className="flex h-[14px] items-center gap-[2px] rounded-[3px] border border-[#8f8f8f] bg-linear-to-b from-white to-[#e4e4e4] px-[2px] [font-family:Lato,'Noto_Sans',sans-serif]"><Icon n="demo" /><span>Demo</span></button>
        <span className="mx-[4px] size-[10px] rounded-full border-[3px] border-[#b8b8b8] bg-[#ececec]" />
        <div className="flex h-[10px] min-w-0 flex-1 items-center justify-center border border-[#b2b2b2] bg-[#dadada]"><span>No Transfer</span></div>
        <span className="ml-[3px] flex items-center"><Icon n="db" /><Icon n="sync" /><span className="ml-[2px]">08:05:49 UTC</span></span>
        <button type="button" className="ml-[5px] flex h-[14px] items-center gap-[2px] rounded-[3px] border border-[#8f8f8f] bg-linear-to-b from-white to-[#e4e4e4] px-[2px] [font-family:Lato,'Noto_Sans',sans-serif]"><Icon n="clock" c="w-2 h-2" /><span>10:05:49 Europe/Berlin</span></button>
        <span className="ml-[3px] flex gap-[5px]"><Btn n="world" label="Network" on /><Btn n="uk" label="Language" /></span>
      </footer>
    </div>
  );
}
